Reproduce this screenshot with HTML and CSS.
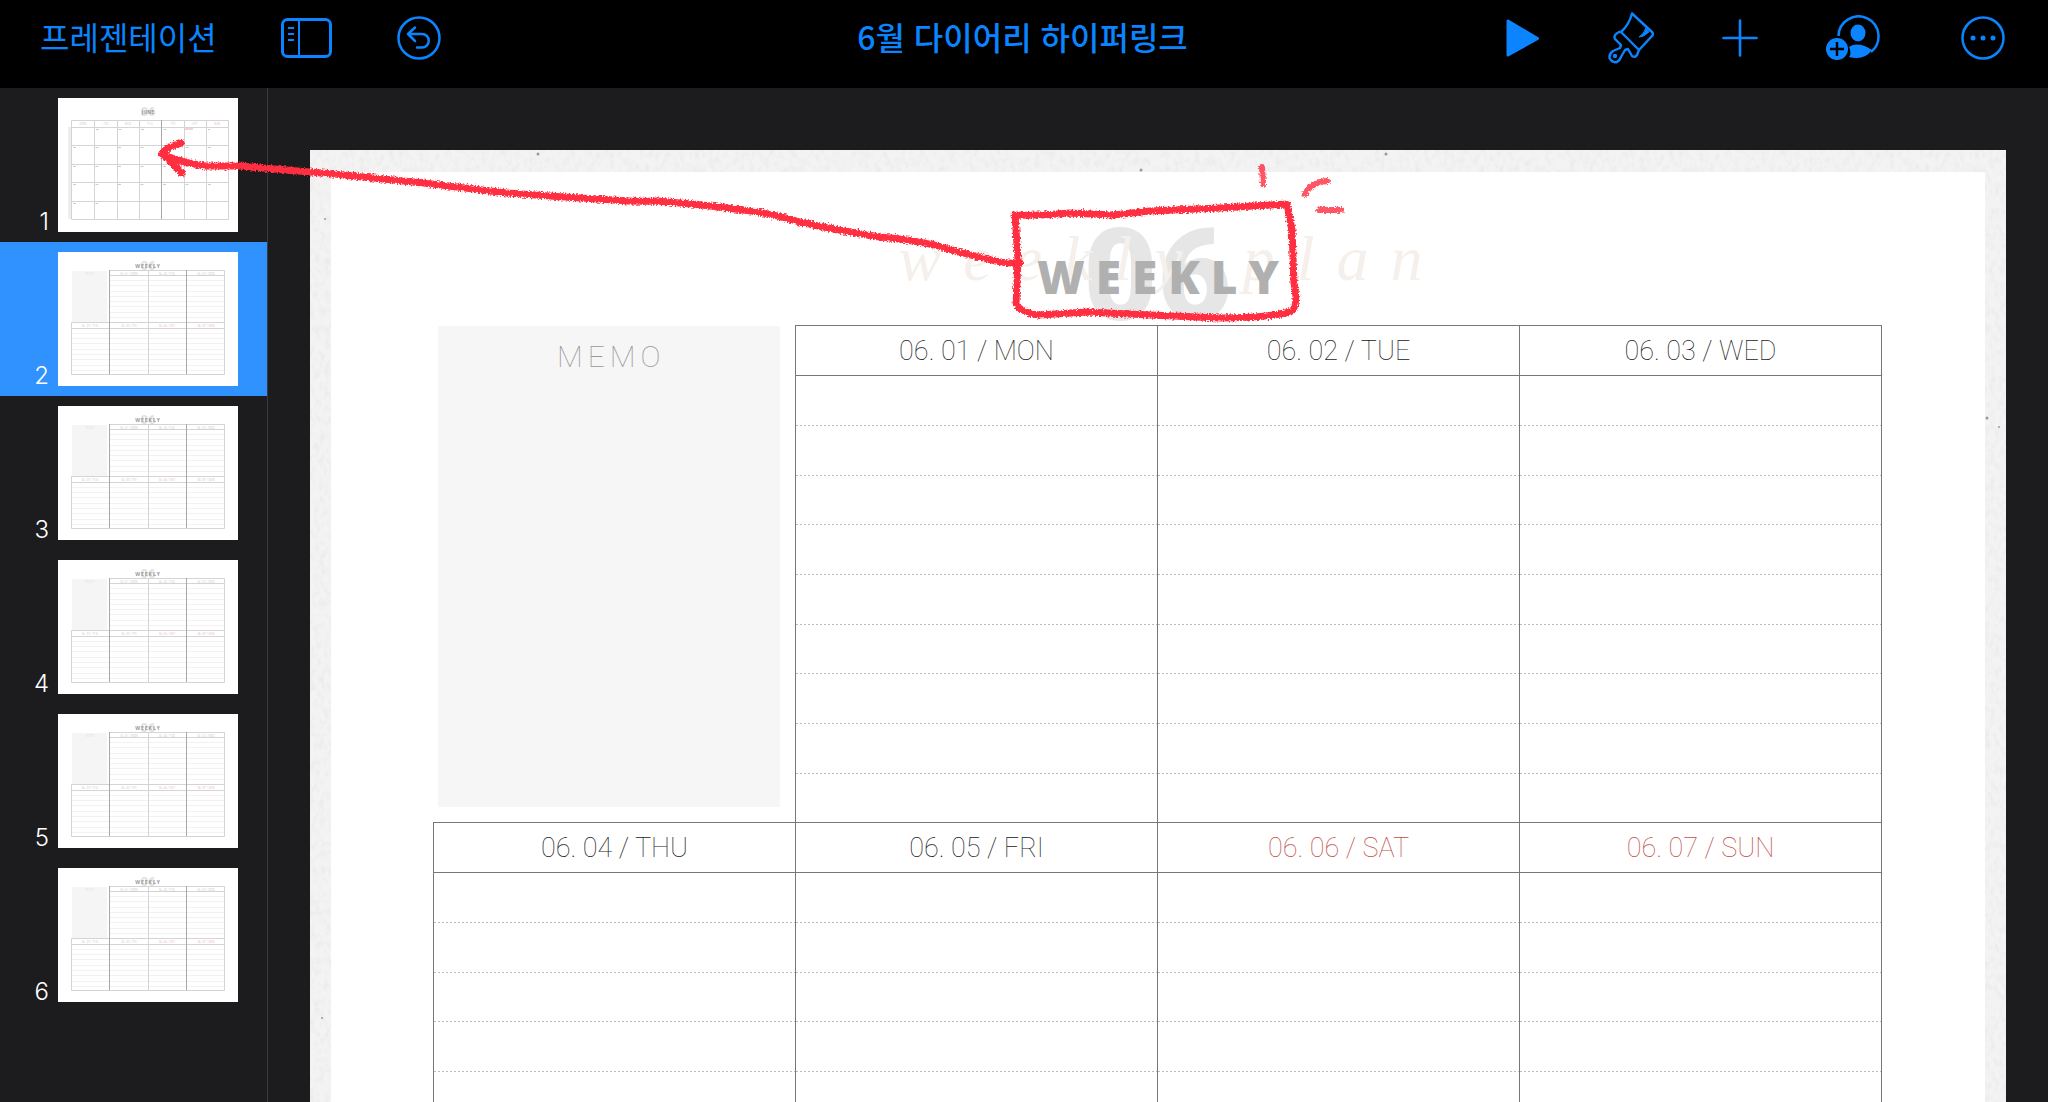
FILE: index.html
```html
<!DOCTYPE html>
<html lang="ko">
<head>
    <meta charset="utf-8">
    <title>6월 다이어리 하이퍼링크</title>
    <link rel="stylesheet" href="styles.css">
</head>
<body>
    <svg class="defs" aria-hidden="true">
        <defs>
            <filter id="crayon" filterUnits="userSpaceOnUse" x="0" y="0" width="1400" height="340">
                <feTurbulence type="fractalNoise" baseFrequency="0.6" numOctaves="2" seed="4" result="noise"/>
                <feDisplacementMap in="SourceGraphic" in2="noise" scale="5" xChannelSelector="R" yChannelSelector="G"/>
            </filter>
            <filter id="paper" x="0" y="0" width="100%" height="100%">
                <feTurbulence type="fractalNoise" baseFrequency="0.2 0.12" numOctaves="4" seed="7"/>
                <feColorMatrix values="0 0 0 0 0.5  0 0 0 0 0.5  0 0 0 0 0.5  0.35 0 0 0 -0.15"/>
            </filter>
            <symbol id="thumb-month" viewBox="0 0 180 134">
                <rect x="10" y="29" width="3" height="92" fill="#eee"/>
                <text x="90" y="18" class="thumb-big">06</text>
                <text x="90" y="16" class="thumb-month">JUNE</text>
                <path class="thumb-line" d="M13.500 22.500H170.500V121.500H13.500ZM13.500 29.500H170.500M13.500 47.500H170.500M13.500 66.500H170.500M13.500 84.500H170.500M13.500 103.500H170.500M36.500 22V121M59.500 22V121M81.500 22V121M126.500 22V121M148.500 22V121"/>
                <path class="thumb-rule" d="M103.500 22V121"/>
                <g class="thumb-label">
                    <text x="25" y="27">MON</text><text x="48" y="27">TUE</text><text x="70" y="27">WED</text><text x="92" y="27">THU</text><text x="115" y="27">FRI</text><text x="137" y="27">SAT</text><text x="159" y="27" class="thumb-red">SUN</text>
                </g>
                <path d="M127 31H135" stroke="#e2a8a8"/>
                <path d="M15 49.500H170M15 68.500H170M15 86.500H170M15 105.500H40M38 31.500H125M150 31.500H152" stroke="#ccc" stroke-dasharray="3 19.500"/>
            </symbol>
            <symbol id="thumb-week" viewBox="0 0 180 134">
                <rect x="14" y="19" width="35" height="51" fill="#f5f5f5"/>
                <text x="90" y="18" class="thumb-big">06</text>
                <text x="90" y="16" class="thumb-title">WEEKLY</text>
                <path class="thumb-dots" d="M51 28.500H166M51 33.500H166M51 39.500H166M51 44.500H166M51 49.500H166M51 54.500H166M51 60.500H166M51 65.500H166M14 81.500H166M14 86.500H166M14 91.500H166M14 97.500H166M14 102.500H166M14 107.500H166M14 113.500H166M14 118.500H166"/>
                <path class="thumb-line" d="M51.500 18.500H166.500V122.500H13.500V70.500H166.500M51 23.500H166M14 76.500H166M90.500 18V122"/>
                <path class="thumb-rule" d="M51.500 18V122M128.500 18V122"/>
                <g class="thumb-label">
                    <text x="32" y="23" opacity=".4">MEMO</text><text x="71" y="23">06. 01 / MON</text><text x="109" y="23">06. 02 / TUE</text><text x="148" y="23">06. 03 / WED</text>
                    <text x="32" y="75">06. 04 / THU</text><text x="71" y="75">06. 05 / FRI</text><text x="109" y="75" class="thumb-red">06. 06 / SAT</text><text x="148" y="75" class="thumb-red">06. 07 / SUN</text>
                </g>
            </symbol>
        </defs>
    </svg>

    <header class="toolbar">
        <div class="tools tools-left">
            <a class="back" href="#">프레젠테이션</a>
            <button class="tool" aria-label="보기">
                <svg width="52" height="42" viewBox="0 0 52 42"><rect x="1.500" y="2.500" width="48" height="37" rx="5" fill="none" stroke="currentColor" stroke-width="3"/><path d="M18 2V40M7 11H13M7 17H13M7 23H13" stroke="currentColor" stroke-width="2"/></svg>
            </button>
            <button class="tool" aria-label="실행 취소">
                <svg width="44" height="44" viewBox="0 0 44 44" fill="none" stroke="currentColor" stroke-width="2.500" stroke-linecap="round" stroke-linejoin="round"><circle cx="22" cy="22" r="20.500"/><path d="M18 11.500L11 18L18 25M11 18H25A6.500 6.500 0 0 1 25 31.500H20"/></svg>
            </button>
        </div>
        <h1 class="doc-title">6월 다이어리 하이퍼링크</h1>
        <div class="tools tools-right">
            <div class="tools tools-edit">
                <button class="tool" aria-label="재생">
                    <svg width="34" height="40" viewBox="0 0 34 40"><path d="M2 3L31.500 20.500L2 37Z" fill="currentColor" stroke="currentColor" stroke-width="3" stroke-linejoin="round"/></svg>
                </button>
                <button class="tool" aria-label="포맷">
                    <svg width="46" height="52" viewBox="0 0 46 52" fill="none" stroke="currentColor" stroke-width="2.400" stroke-linejoin="round" stroke-linecap="round"><path d="M24 1.500L44 20Q46 22 44 24L31 38L13 20Q21 13 24 1.500ZM13 20L11 20Q5 23 7 27L13 33L12 36L5 39Q1 42 1.500 46Q4 51 9 50Q12 48 13 45L17 38L20 37L24 44Q27 46 29 43L31 38"/><path d="M38 16Q36 22 31 25Q36 25 41 20Z" fill="currentColor" stroke-width="1"/><circle cx="7" cy="44" r="1" fill="currentColor"/></svg>
                </button>
                <button class="tool" aria-label="추가">
                    <svg width="36" height="38" viewBox="0 0 36 38"><path d="M18 1.500V36.500M1.500 19H34.500" stroke="currentColor" stroke-width="2.600" stroke-linecap="round"/></svg>
                </button>
                <button class="tool" aria-label="공동 작업">
                    <svg width="54" height="46" viewBox="0 0 54 46"><path d="M12.500 21A20 20 0 1 1 45 37" fill="none" stroke="currentColor" stroke-width="2.500"/><ellipse cx="32" cy="18" rx="7.500" ry="8.500" fill="currentColor"/><path d="M23 42Q26 39 23 32Q32 26 46 35Q38 46 23 42Z" fill="currentColor"/><circle cx="11" cy="34" r="11" fill="currentColor"/><path d="M11 27V41M4 34H18" stroke="#000" stroke-width="2.400"/></svg>
                </button>
            </div>
            <button class="tool" aria-label="더 보기">
                <svg width="44" height="44" viewBox="0 0 44 44" fill="currentColor"><circle cx="22" cy="22" r="20.500" fill="none" stroke="currentColor" stroke-width="2.500"/><circle cx="12" cy="22" r="2.500"/><circle cx="22" cy="22" r="2.500"/><circle cx="32" cy="22" r="2.500"/></svg>
            </button>
        </div>
    </header>

    <div class="workspace">
        <nav class="navigator">
            <ol class="slides">
                <li class="slide-item"><span class="num">1</span><button class="thumb" aria-label="슬라이드 1"><svg width="180" height="134"><use href="#thumb-month"/></svg></button></li>
                <li class="slide-item selected"><span class="num">2</span><button class="thumb" aria-label="슬라이드 2"><svg width="180" height="134"><use href="#thumb-week"/></svg></button></li>
                <li class="slide-item"><span class="num">3</span><button class="thumb" aria-label="슬라이드 3"><svg width="180" height="134"><use href="#thumb-week"/></svg></button></li>
                <li class="slide-item"><span class="num">4</span><button class="thumb" aria-label="슬라이드 4"><svg width="180" height="134"><use href="#thumb-week"/></svg></button></li>
                <li class="slide-item"><span class="num">5</span><button class="thumb" aria-label="슬라이드 5"><svg width="180" height="134"><use href="#thumb-week"/></svg></button></li>
                <li class="slide-item"><span class="num">6</span><button class="thumb" aria-label="슬라이드 6"><svg width="180" height="134"><use href="#thumb-week"/></svg></button></li>
            </ol>
        </nav>

        <main class="canvas">
            <article class="slide">
                <svg class="texture" aria-hidden="true">
                    <rect width="100%" height="100%" filter="url(#paper)"/>
                    <g fill="#999"><circle cx="228" cy="4" r="1.500"/><circle cx="831" cy="20" r="1.500"/><circle cx="1076" cy="4" r="1.500"/><circle cx="15" cy="69" r="1"/><circle cx="1677" cy="268" r="1.500"/><circle cx="1689" cy="277" r="1"/><circle cx="12" cy="868" r="1"/></g>
                </svg>
                <div class="sheet">
                    <div class="heading">
                        <span class="heading-month">06</span>
                        <span class="heading-script">weekly plan</span>
                        <h2 class="heading-title">WEEKLY</h2>
                    </div>
                    <table class="planner">
                        <tbody>
                            <tr><td class="memo-cell" rowspan="10"><div class="memo">MEMO</div></td><th>06. 01 / MON</th><th>06. 02 / TUE</th><th>06. 03 / WED</th></tr>
                            <tr><td></td><td></td><td></td></tr>
                            <tr><td></td><td></td><td></td></tr>
                            <tr><td></td><td></td><td></td></tr>
                            <tr><td></td><td></td><td></td></tr>
                            <tr><td></td><td></td><td></td></tr>
                            <tr><td></td><td></td><td></td></tr>
                            <tr><td></td><td></td><td></td></tr>
                            <tr><td></td><td></td><td></td></tr>
                            <tr><td></td><td></td><td></td></tr>
                        </tbody>
                        <tbody>
                            <tr><th>06. 04 / THU</th><th>06. 05 / FRI</th><th class="weekend">06. 06 / SAT</th><th class="weekend">06. 07 / SUN</th></tr>
                            <tr><td></td><td></td><td></td><td></td></tr>
                            <tr><td></td><td></td><td></td><td></td></tr>
                            <tr><td></td><td></td><td></td><td></td></tr>
                            <tr><td></td><td></td><td></td><td></td></tr>
                            <tr><td></td><td></td><td></td><td></td></tr>
                            <tr><td></td><td></td><td></td><td></td></tr>
                            <tr><td></td><td></td><td></td><td></td></tr>
                            <tr><td></td><td></td><td></td><td></td></tr>
                            <tr><td></td><td></td><td></td><td></td></tr>
                        </tbody>
                    </table>
                </div>
            </article>
        </main>
    </div>

    <!-- pen marks: link from the weekly title to slide 1 -->
    <svg class="ink" width="1400" height="340" viewBox="0 0 1400 340" aria-hidden="true">
        <g filter="url(#crayon)">
            <path d="M1020 263Q1004 264 988 259Q960 253 935 245Q905 239 880 237Q835 230 800 222Q770 213 743 210Q700 204 657 201Q635 202 613 200Q560 197 507 193L423 183L333 174L240 166H205Q178 162 162 154M162 153Q170 146 181 143M162 153L182 173"/>
            <path d="M1015 215Q1040 216 1069 213L1113 215L1150 211L1220 208L1287 204L1292 230L1294 283Q1299 308 1290 312Q1265 318 1220 318L1150 315L1087 312L1039 315Q1019 312 1016 303L1018 260Z"/>
            <path class="faint" d="M1262 167L1263 184M1305 194Q1311 182 1327 181M1319 210H1341"/>
        </g>
    </svg>
</body>
</html>
```

FILE: styles.css
```css
* {
    box-sizing: border-box;
}

body {
    display: flex;
    flex-direction: column;
    height: 100vh;
    margin: 0;
    overflow: hidden;
    background: #1c1c1e;
    font-family: "Noto Sans CJK KR", sans-serif;
}

button {
    padding: 0;
    border: 0;
    background: none;
    color: inherit;
}

svg {
    display: block;
}

.defs {
    position: absolute;
    width: 0;
    height: 0;
}

/* toolbar */
.toolbar {
    display: grid;
    grid-template-columns: 1fr auto 1fr;
    align-items: center;
    flex: none;
    height: 88px;
    padding: 0 43px 12px 40px;
    background: #000;
    color: #0a84ff;
}

.tools {
    display: flex;
    align-items: center;
}

.tools-left {
    gap: 64px;
}

.tools-right {
    justify-content: flex-end;
    gap: 81px;
}

.tools-edit {
    gap: 68px;
}

.back,
.doc-title {
    margin: 0;
    padding-bottom: 4px;
    color: inherit;
    font-size: 32px;
    font-weight: 400;
    line-height: 40px;
    text-decoration: none;
}

.doc-title {
    font-weight: 500;
}

/* slide navigator */
.workspace {
    display: flex;
    flex: 1;
    min-height: 0;
}

.navigator {
    flex: none;
    width: 268px;
    border-right: 1px solid #3a3a3c;
}

.slides {
    margin: 0;
    padding: 0;
    list-style: none;
}

.slide-item {
    display: flex;
    align-items: flex-end;
    gap: 9px;
    padding: 10px 0;
}

.slide-item.selected {
    background: #2f92ff;
}

.num {
    width: 49px;
    color: #fff;
    font-family: Inter, sans-serif;
    font-size: 24px;
    font-weight: 300;
    line-height: 20px;
    text-align: right;
}

.thumb {
    background: #fff;
}

.thumb-line {
    fill: none;
    stroke: #d4d4d4;
}

.thumb-rule {
    stroke: #a8a8a8;
}

.thumb-dots {
    stroke: #f2f2f2;
}

.thumb-big {
    fill: #e2e2e2;
    font: 900 13px Roboto, sans-serif;
    text-anchor: middle;
}

.thumb-title,
.thumb-month {
    fill: #999;
    font: 700 5px "Open Sans", sans-serif;
    letter-spacing: 1px;
    text-anchor: middle;
}

.thumb-month {
    letter-spacing: 0;
}

.thumb-label {
    fill: #bbb;
    font: 300 3px Roboto, sans-serif;
    text-anchor: middle;
}

.thumb-red {
    fill: #dba0a0;
}

/* slide */
.canvas {
    flex: 1;
    padding: 62px 42px 0;
    overflow: hidden;
}

.slide {
    position: relative;
    padding: 22px 21px;
    background: #f3f3f3;
}

.texture {
    position: absolute;
    inset: 0;
    width: 100%;
    height: 100%;
}

.sheet {
    position: relative;
    padding: 0 103px 72px 102px;
    background: #fff;
}

.heading {
    display: grid;
    place-items: center;
    height: 153px;
}

.heading > * {
    grid-area: 1 / 1;
}

.heading-month {
    padding-top: 54px;
    color: #e6e6e6;
    font-family: Roboto, sans-serif;
    font-size: 128px;
    font-weight: 900;
    line-height: 96px;
}

.heading-script {
    padding: 20px 0 0 28px;
    color: #f5f0eb;
    font-family: "Liberation Serif", serif;
    font-size: 64px;
    font-style: italic;
    letter-spacing: 22px;
    line-height: 64px;
    white-space: nowrap;
}

.heading-title {
    margin: 0;
    padding: 54px 0 0 12px;
    color: #b0b0b0;
    font-family: "Open Sans", sans-serif;
    font-size: 46px;
    font-weight: 800;
    letter-spacing: 11px;
    line-height: 48px;
}

.planner {
    width: 100%;
    border-collapse: collapse;
    table-layout: fixed;
    font-family: Roboto, sans-serif;
}

.planner tr {
    height: 50px;
}

.planner tr:nth-child(3n + 4) {
    height: 49px;
}

.planner th {
    padding: 0;
    border: 1px solid #777;
    color: #222;
    font-size: 27px;
    font-weight: 100;
    line-height: 32px;
}

.planner th.weekend {
    color: #c0504d;
}

.planner td {
    padding: 0;
    border: solid #777;
    border-width: 0 1px;
    background: repeating-linear-gradient(90deg, #bbb 0 2px, transparent 2px 4px) bottom / 100% 1px no-repeat;
}

.planner tr:last-child td {
    border-bottom-width: 1px;
    background: none;
}

.planner .memo-cell {
    padding: 0 15px 0 4px;
    border-left: 0;
    background: none;
    vertical-align: top;
}

.memo {
    height: 481px;
    padding: 15px 0 0 5px;
    background: #f6f6f6;
    color: #999;
    font-size: 30px;
    font-weight: 100;
    letter-spacing: 5px;
    line-height: 32px;
    text-align: center;
}

/* pen marks drawn over the whole screen */
.ink {
    position: absolute;
    top: 0;
    left: 0;
    fill: none;
    stroke: #ff2d3f;
    stroke-width: 7;
    stroke-linecap: round;
    stroke-linejoin: round;
    pointer-events: none;
}

.faint {
    stroke-width: 6;
    opacity: .8;
}
```
